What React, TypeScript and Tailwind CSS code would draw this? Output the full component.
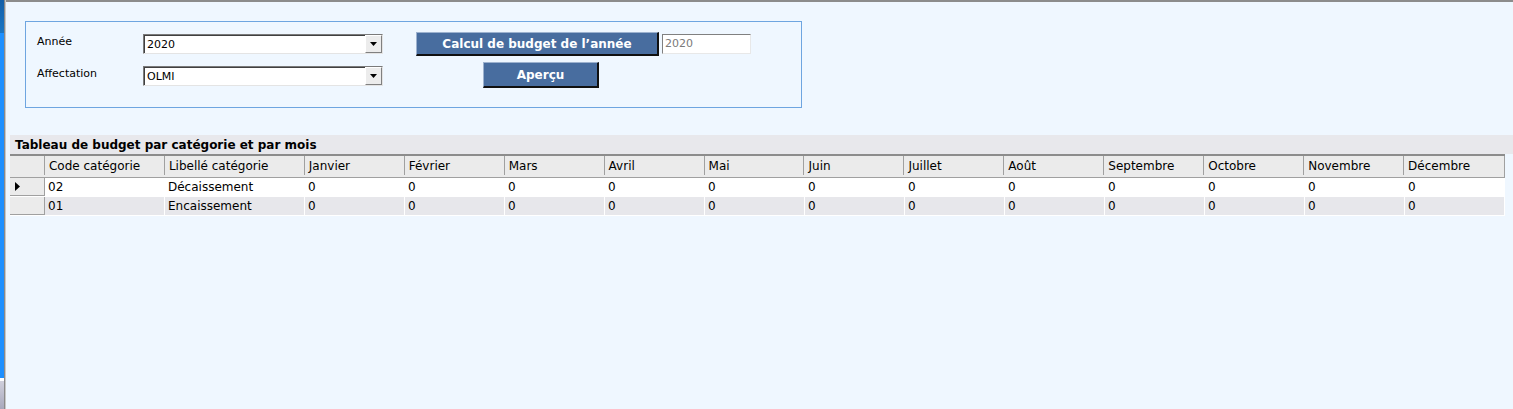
import React from "react";

const months = [
    "Janvier",
    "Février",
    "Mars",
    "Avril",
    "Mai",
    "Juin",
    "Juillet",
    "Août",
    "Septembre",
    "Octobre",
    "Novembre",
    "Décembre",
];

const rows = [
    { code: "02", label: "Décaissement", current: true },
    { code: "01", label: "Encaissement", current: false },
];

const ComboBox: React.FC<{ value: string }> = ({ value }) => (
    <div className="w-[240px] h-[20px] flex border border-t-[#7a7a7a] border-l-[#7a7a7a] border-r-[#e4e4e4] border-b-[#e4e4e4] bg-white">
        <div className="flex-1 flex items-center pl-[2px] pt-[1px] text-[11px] text-black border-t border-l border-t-[#404040] border-l-[#404040]">
            {value}
        </div>
        <div className="w-[17px] flex items-center justify-center bg-[#ececec] border border-t-white border-l-white border-r-[#808080] border-b-[#808080]">
            <svg width="7" height="4" viewBox="0 0 7 4">
                <path d="M0 0h7L3.5 4z" fill="#000" />
            </svg>
        </div>
    </div>
);

const BlueButton: React.FC<{ width: string; height: string; children: React.ReactNode }> = ({
    width,
    height,
    children,
}) => (
    <button
        className={`${width} ${height} bg-[#486d9f] text-white font-bold text-[12px] flex items-center justify-center border-t border-l border-t-[#9db2cf] border-l-[#9db2cf] border-r-2 border-b-2 border-r-[#101010] border-b-[#101010]`}
    >
        {children}
    </button>
);

export default function App() {
    return (
        <div
            className="w-full h-[409px] flex bg-[#eff7ff] text-black overflow-hidden"
            style={{ fontFamily: '"DejaVu Sans", Verdana, sans-serif' }}
        >
            {/* left window edge */}
            <div className="w-[4px] flex flex-col">
                <div className="h-[33px] bg-gradient-to-b from-[#1560a8] to-[#1a76c4]" />
                <div className="flex-1 bg-[#1e90ff]" />
                <div className="h-[3px] bg-white" />
                <div className="h-[28px] bg-gradient-to-b from-[#d0d0dc] to-[#a8a8bc]" />
            </div>
            <div className="w-[1px] bg-[#8a8a8a]" />
            <div className="w-[1px] bg-[#c8c8c8]" />

            <div className="flex-1 flex flex-col border-t-2 border-t-[#8c8c8c]">
                {/* criteria panel */}
                <div className="ml-[19px] mt-[19px] w-[777px] h-[87px] border border-[#6ea5e0] flex">
                    <div className="pl-[11px] pt-[12px] flex flex-col gap-[12px]">
                        <div className="flex">
                            <div className="w-[106px] text-[11px]">Année</div>
                            <ComboBox value="2020" />
                        </div>
                        <div className="flex">
                            <div className="w-[106px] text-[11px]">Affectation</div>
                            <ComboBox value="OLMI" />
                        </div>
                    </div>
                    <div className="ml-[33px] pt-[10px] flex flex-col gap-[6px]">
                        <div className="flex items-start gap-[3px]">
                            <BlueButton width="w-[243px]" height="h-[24px]">
                                Calcul de budget de l’année
                            </BlueButton>
                            <div className="mt-[2px] w-[89px] h-[20px] bg-white border border-t-[#808080] border-l-[#808080] border-r-[#e8e8e8] border-b-[#e8e8e8] text-[11px] text-[#7a7a7a] flex items-center pl-[2px]">
                                2020
                            </div>
                        </div>
                        <div className="ml-[67px]">
                            <BlueButton width="w-[116px]" height="h-[26px]">
                                Aperçu
                            </BlueButton>
                        </div>
                    </div>
                </div>

                {/* budget grid */}
                <div className="ml-[4px] mt-[27px] flex flex-col">
                    <div className="h-[19px] bg-[#e8e8ec] flex items-center pl-[5px] text-[12px] font-bold">
                        Tableau de budget par catégorie et par mois
                    </div>
                    <div className="border-t-2 border-t-[#8c8c8c] flex flex-col w-[1495px]">
                        <div className="flex h-[22px] pb-[2px] bg-[#ebebeb] border-b border-b-[#a0a0a0] border-r border-r-[#a0a0a0] text-[12px]">
                            <div className="w-[35px] border-r border-r-[#a0a0a0]" />
                            <div className="w-[120px] pl-[4px] flex items-center border-r border-r-[#a0a0a0]">
                                Code catégorie
                            </div>
                            <div className="w-[140px] pl-[4px] flex items-center border-r border-r-[#a0a0a0]">
                                Libellé catégorie
                            </div>
                            {months.map((m, i) => (
                                <div
                                    key={m}
                                    className={`w-[100px] pl-[4px] flex items-center ${i < months.length - 1 ? "border-r border-r-[#a0a0a0]" : ""}`}
                                >
                                    {m}
                                </div>
                            ))}
                        </div>
                        {rows.map((r, ri) => (
                            <div
                                key={r.code}
                                className={`flex h-[19px] text-[12px] border-b border-b-white ${ri % 2 === 0 ? "bg-white" : "bg-[#e7e7eb]"}`}
                            >
                                <div className="w-[35px] bg-[#ebebeb] border-r border-r-[#a0a0a0] border-b border-b-[#a0a0a0] flex items-center pl-[5px]">
                                    {r.current && (
                                        <svg width="5" height="9" viewBox="0 0 5 9">
                                            <path d="M0 0l5 4.5L0 9z" fill="#000" />
                                        </svg>
                                    )}
                                </div>
                                <div className="w-[120px] pl-[3px] flex items-center border-r border-r-white">
                                    {r.code}
                                </div>
                                <div className="w-[140px] pl-[3px] flex items-center border-r border-r-white">
                                    {r.label}
                                </div>
                                {months.map((m) => (
                                    <div key={m} className="w-[100px] pl-[3px] flex items-center border-r border-r-white">
                                        0
                                    </div>
                                ))}
                            </div>
                        ))}
                    </div>
                </div>
            </div>
        </div>
    );
}
